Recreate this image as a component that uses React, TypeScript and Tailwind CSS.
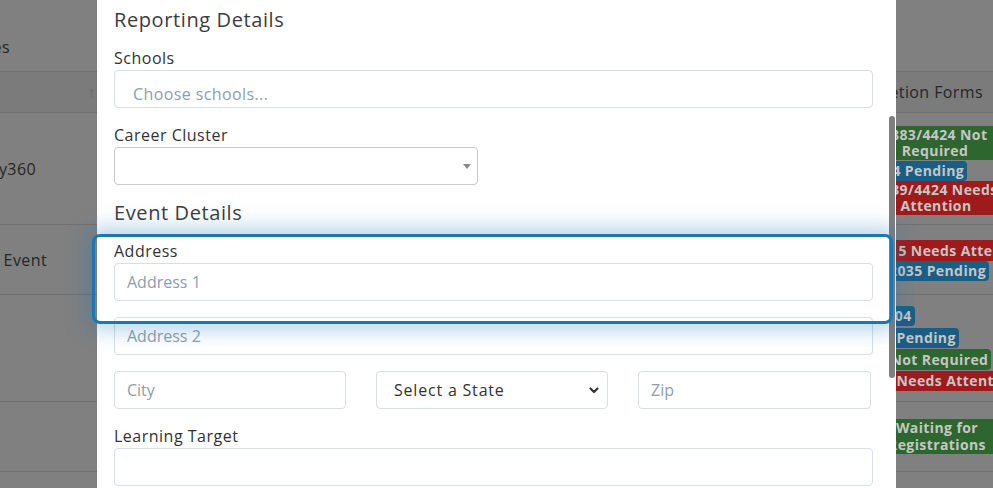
import type { ReactNode } from 'react'

const font = { fontFamily: '"Open Sans", "Noto Sans", sans-serif' }

function Label({ children }: { children: ReactNode }) {
  return <div className="mb-[1px] text-[16px] leading-[22px] tracking-[0.5px] text-[#333]">{children}</div>
}

function TextInput({ placeholder }: { placeholder?: string }) {
  return (
    <input
      placeholder={placeholder}
      className="h-[38px] w-full rounded-[4px] border border-[#d6dfe5] bg-white px-3 text-[16px] text-[#333] outline-none placeholder:text-[#8d9eab]"
    />
  )
}

function Badge({ color, className, children }: { color: string; className?: string; children: ReactNode }) {
  return (
    <div
      className={`shrink-0 rounded-[4px] px-[3px] text-center text-[14px] font-bold text-[#c6c6c6] ${color} ${className ?? ''}`}
    >
      {children}
    </div>
  )
}

const green = 'bg-[#2d662f]'
const blue = 'bg-[#1a5e86]'
const red = 'bg-[#9f1b1b]'

// text that ends at a fixed x and runs off to the left
function EndAt({ className, children }: { className: string; children: ReactNode }) {
  return (
    <div className={`flex shrink-0 justify-end ${className}`}>
      <span className="shrink-0 whitespace-nowrap">{children}</span>
    </div>
  )
}

// the table behind the dimmed backdrop
function Backdrop() {
  return (
    <div className="flex h-full w-full flex-col bg-[#808080] text-[16px] tracking-[0.4px] text-[#262626]">
      <div className="flex h-[72px] items-end border-b border-[#6f6f6f] pb-[12px]">
        <EndAt className="w-[10px]">Schedules</EndAt>
      </div>
      <div className="flex h-[41px] items-center border-b border-[#6f6f6f] bg-[#7b7b7b]">
        <EndAt className="w-[97px] pr-[1px] text-[#6a6a6a]">↑</EndAt>
        <EndAt className="w-[886px]">Completion Forms</EndAt>
      </div>
      <div className="flex h-[112px] border-b border-[#6f6f6f]">
        <div className="flex w-[872px] shrink-0 items-center">
          <EndAt className="w-[36px]">Academy360</EndAt>
        </div>
        <div className="flex w-[140px] shrink-0 flex-col items-start pt-[13px] leading-[16px]">
          <Badge color={green} className="w-[126px] py-[1px]">3883/4424 Not Required</Badge>
          <Badge color={blue} className="ml-[9px] mt-[1px] py-[2px] whitespace-nowrap">14 Pending</Badge>
          <Badge color={red} className="ml-[-2px] w-[132px] py-[1px]">3539/4424 Needs Attention</Badge>
        </div>
      </div>
      <div className="flex h-[70px] border-b border-[#6f6f6f]">
        <div className="flex w-[872px] shrink-0 items-center">
          <EndAt className="w-[47px]">Type of Event</EndAt>
        </div>
        <div className="flex flex-col items-start pt-[15px] leading-[16px]">
          <Badge color={red} className="ml-[15px] py-[2.5px] whitespace-nowrap">15 Needs Attention</Badge>
          <Badge color={blue} className="ml-[14px] py-[2px] whitespace-nowrap">2035 Pending</Badge>
        </div>
      </div>
      <div className="flex h-[107px] border-b border-[#6f6f6f]">
        <div className="w-[872px] shrink-0" />
        <div className="flex flex-col items-start gap-[1px] pt-[11px] leading-[16px]">
          <Badge color={blue} className="ml-[3px] py-[2px] whitespace-nowrap">1004</Badge>
          <Badge color={blue} className="ml-[9px] mt-[1px] py-[2px] whitespace-nowrap">4 Pending</Badge>
          <Badge color={green} className="ml-[3px] py-[2.5px] whitespace-nowrap">2 Not Required</Badge>
          <Badge color={red} className="ml-[9px] py-[2px] whitespace-nowrap">3 Needs Attention</Badge>
        </div>
      </div>
      <div className="flex h-[70px] border-b border-[#6f6f6f]">
        <div className="w-[872px] shrink-0" />
        <div className="flex w-[140px] shrink-0 flex-col items-start pt-[17px] leading-[16.5px]">
          <Badge color={green} className="ml-[2px] w-[126px] py-[1px]">Waiting for Registrations</Badge>
        </div>
      </div>
    </div>
  )
}

export default function App() {
  return (
    <div className="relative h-[488px] w-[993px] overflow-hidden" style={font}>
      <Backdrop />

      <div className="absolute left-[97px] top-0 h-[488px] w-[799px] overflow-hidden bg-white">
        <div className="pl-[17px] pr-[23px] pt-[8px]">
          <h3 className="mb-[15px] text-[20px] leading-[24px] tracking-[0.6px] text-[#3d3d3d]">Reporting Details</h3>

          <div className="mb-4">
            <Label>Schools</Label>
            <div className="h-[38px] rounded-[4px] border border-[#d6dfe5] pl-[18px] pt-[11px] text-[16px] leading-[24px] tracking-[0.4px] text-[#8d9eab]">
              Choose schools...
            </div>
          </div>

          <div className="mb-4">
            <Label>Career Cluster</Label>
            <div className="flex h-[38px] w-[364px] items-center justify-end rounded-[4px] border border-[#c9cdd2] pr-[6px]">
              <span className="border-x-[4px] border-t-[5px] border-x-transparent border-t-[#888]" />
            </div>
          </div>

          <h3 className="mb-[15px] text-[20px] leading-[24px] tracking-[0.6px] text-[#3d3d3d]">Event Details</h3>

          <div className="mb-4">
            <Label>Address</Label>
            <TextInput placeholder="Address 1" />
          </div>
          <div className="mb-4">
            <TextInput placeholder="Address 2" />
          </div>

          <div className="mb-4 flex gap-[30px]">
            <div className="w-[232px]">
              <TextInput placeholder="City" />
            </div>
            <div className="relative w-[232px]">
              <select className="h-[38px] w-full appearance-none rounded-[4px] border border-[#d6dfe5] bg-white pl-[17px] text-[16px] tracking-[0.8px] text-[#333] outline-none">
                <option>Select a State</option>
              </select>
              <svg
                className="pointer-events-none absolute right-[9px] top-[16px]"
                width="10"
                height="7"
                viewBox="0 0 10 7"
                fill="none"
                stroke="#333"
                strokeWidth="2.2"
                strokeLinecap="round"
                strokeLinejoin="round"
              >
                <path d="M1.5 1.5 5 5l3.5-3.5" />
              </svg>
            </div>
            <div className="w-[233px]">
              <TextInput placeholder="Zip" />
            </div>
          </div>

          <div className="mb-4">
            <Label>Learning Target</Label>
            <TextInput />
          </div>
        </div>

        {/* scrollbar thumb */}
        <div className="absolute left-[792px] top-[116px] h-[262px] w-[6px] rounded-full bg-[#7f7f7f]" />
      </div>

      {/* focus ring around the address block */}
      <div className="pointer-events-none absolute left-[92px] top-[234px] h-[90px] w-[801px] rounded-[8px] border-[3px] border-[#1a77b5] shadow-[0_0_20px_7px_rgba(26,119,181,0.3)]" />
    </div>
  )
}
